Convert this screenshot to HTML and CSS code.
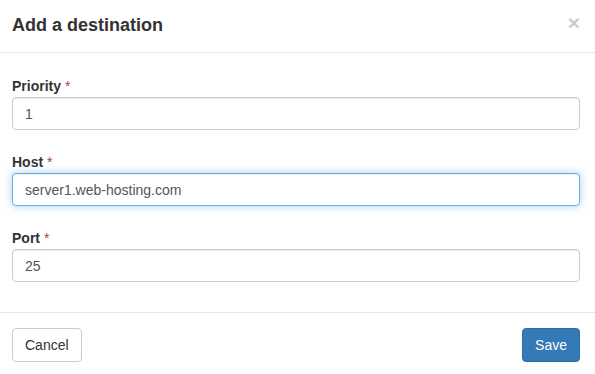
FILE: index.html
```html
<!DOCTYPE html>
<html>
<head>
  <title>Add a destination</title>
  <link rel="stylesheet" href="styles.css">
</head>
<body>
  <div class="modal">
    <div class="modal-header">
      <h4 class="modal-title">Add a destination</h4>
      <button class="close" type="button" aria-label="Close">&times;</button>
    </div>

    <form class="modal-body">
      <div class="form-group">
        <label for="priority">Priority <span class="req">*</span></label>
        <input id="priority" class="form-control" type="text" value="1">
      </div>
      <div class="form-group">
        <label for="host">Host <span class="req">*</span></label>
        <input id="host" class="form-control focused" type="text" value="server1.web-hosting.com">
      </div>
      <div class="form-group">
        <label for="port">Port <span class="req">*</span></label>
        <input id="port" class="form-control" type="text" value="25">
      </div>
    </form>

    <div class="modal-footer">
      <button class="btn btn-default" type="button">Cancel</button>
      <button class="btn btn-primary" type="button">Save</button>
    </div>
  </div>
</body>
</html>
```

FILE: styles.css
```css
html {
  background: #fff;
}
body {
  margin: 0;
  font-family: "Liberation Sans", Arial, sans-serif;
  font-size: 14px;
  line-height: 1.42857;
  color: #333;
}

.modal {
  width: 595px;
  background: #fff;
}

/* HEADER */
.modal-header {
  display: flex;
  align-items: flex-start;
  justify-content: space-between;
  height: 53px;
  box-sizing: border-box;
  padding: 12px 15px 14px 12px;
  border-bottom: 1px solid #e5e5e5;
}
.modal-title {
  margin: 0;
  font-size: 18px;
  line-height: 26px;
  font-weight: bold;
}
.close {
  padding: 0;
  margin-top: 0;
  border: 0;
  background: transparent;
  font-family: "Liberation Sans", Arial, sans-serif;
  font-size: 21px;
  font-weight: bold;
  line-height: 1;
  color: #000;
  opacity: 0.2;
  cursor: pointer;
}

/* BODY */
.modal-body {
  margin: 0;
  padding: 23px 15px 8px 12px;
}
.form-group {
  display: flex;
  flex-direction: column;
  margin-bottom: 22px;
}
.form-group label {
  font-weight: bold;
  line-height: 21px;
}
.req {
  color: #a94442;
  font-weight: normal;
}
.form-control {
  height: 33px;
  box-sizing: border-box;
  padding: 6px 12px;
  font-family: "Liberation Sans", Arial, sans-serif;
  font-size: 14px;
  color: #555;
  background: #fff;
  border: 1px solid #ccc;
  border-radius: 4px;
  box-shadow: inset 0 1px 1px rgba(0, 0, 0, 0.075);
  outline: none;
}
.form-control.focused {
  border-color: #66afe9;
  box-shadow: inset 0 1px 1px rgba(0, 0, 0, 0.075), 0 0 8px rgba(102, 175, 233, 0.6);
}

/* FOOTER */
.modal-footer {
  display: flex;
  justify-content: space-between;
  padding: 15px 15px 15px 12px;
  border-top: 1px solid #e5e5e5;
}
.btn {
  height: 34px;
  padding: 6px 12px;
  font-family: "Liberation Sans", Arial, sans-serif;
  font-size: 14px;
  line-height: 20px;
  border: 1px solid transparent;
  border-radius: 4px;
  cursor: pointer;
}
.btn-default {
  color: #333;
  background: #fff;
  border-color: #ccc;
}
.btn-primary {
  color: #fff;
  background: #337ab7;
  border-color: #2e6da4;
}
```
